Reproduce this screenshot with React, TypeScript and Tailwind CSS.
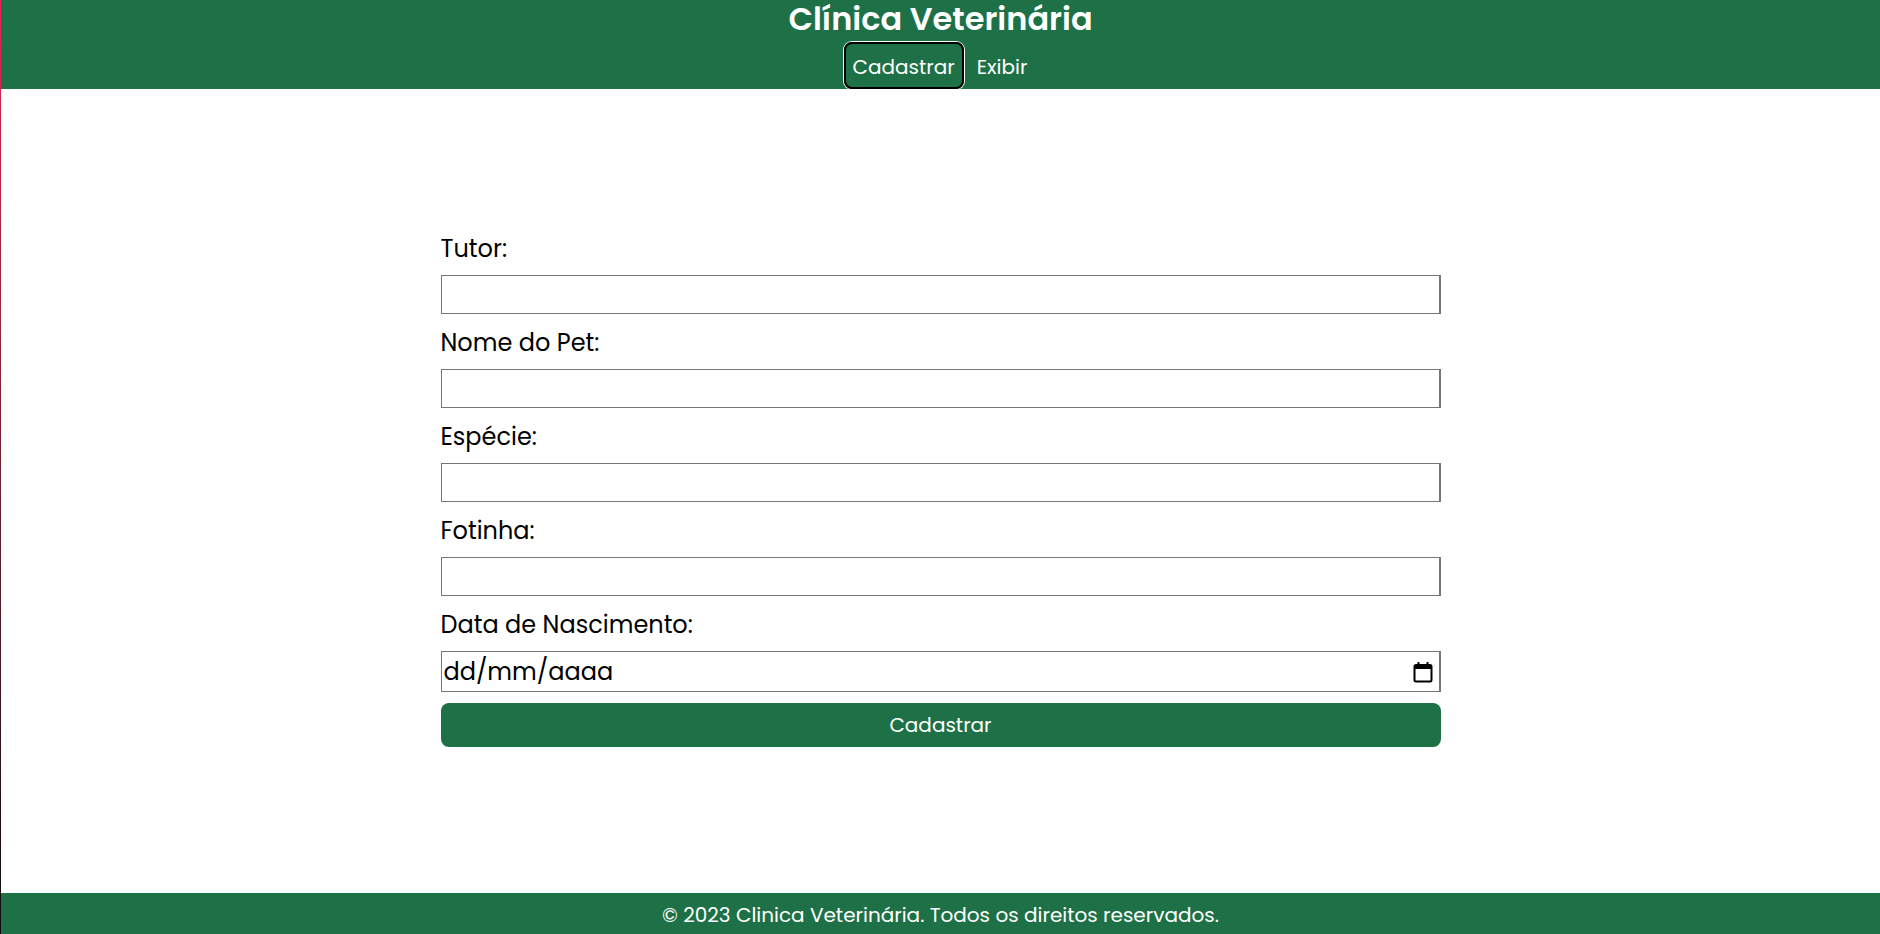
import { FC } from 'react'

const font = { fontFamily: 'Poppins, Inter, "Noto Sans", sans-serif' }

const fields = ['Tutor:', 'Nome do Pet:', 'Espécie:', 'Fotinha:']

const CalendarIcon: FC = () => (
  <svg width="20" height="22" viewBox="0 0 20 22" fill="none">
    <rect x="1.5" y="4" width="17" height="16.5" rx="1.5" stroke="#000" strokeWidth="2" />
    <rect x="1.5" y="4" width="17" height="4" fill="#000" />
    <rect x="4.5" y="1" width="2" height="4" fill="#000" />
    <rect x="13.5" y="1" width="2" height="4" fill="#000" />
  </svg>
)

const Field: FC<{ label: string }> = ({ label }) => (
  <div className="flex flex-col">
    <label className="h-[32px] leading-[32px] text-[24px] text-black">{label}</label>
    <input
      type="text"
      className="mt-[10px] h-[39px] w-full border border-r-2 border-[#767676] bg-white outline-none"
    />
    <div className="h-[13px]" />
  </div>
)

export default function App() {
  return (
    <div className="flex min-h-screen w-full" style={font}>
      <div className="w-px shrink-0 bg-linear-to-b from-[#e8235a] to-[#0b0b0b]" />
      <div className="flex min-h-screen flex-1 flex-col">
        <header className="flex h-[89px] flex-col items-center bg-[#1e7046] text-white">
          <h1 className="h-[42px] pt-[1px] text-[32px] leading-[36px] font-semibold">Clínica Veterinária</h1>
          <nav className="flex items-center gap-[3px] text-[20px]">
            <a className="flex h-[47px] items-center rounded-lg border-2 border-black px-[7px] pt-[3px] ring-1 ring-white">
              Cadastrar
            </a>
            <a className="flex h-[47px] items-center px-[10px] pt-[3px]">Exibir</a>
          </nav>
        </header>

        <main className="flex flex-1 items-center justify-center pb-[2px]">
          <form className="flex w-[1000px] flex-col" onSubmit={e => e.preventDefault()}>
            {fields.map(f => (
              <Field key={f} label={f} />
            ))}
            <label className="h-[32px] leading-[32px] text-[24px] text-black">Data de Nascimento:</label>
            <div className="mt-[10px] flex h-[41px] w-full items-center justify-between border border-r-2 border-[#767676] bg-white pl-[2px] pr-[6px]">
              <span className="text-[24px] leading-none text-black">dd/mm/aaaa</span>
              <CalendarIcon />
            </div>
            <button
              type="submit"
              className="mt-[11px] h-[44px] w-full rounded-lg bg-[#1e7046] text-[20px] text-white"
            >
              Cadastrar
            </button>
          </form>
        </main>

        <footer className="flex h-[41px] items-center justify-center bg-[#1e7046] pt-[3px] text-[20px] text-white">
          © 2023 Clinica Veterinária. Todos os direitos reservados.
        </footer>
      </div>
    </div>
  )
}
